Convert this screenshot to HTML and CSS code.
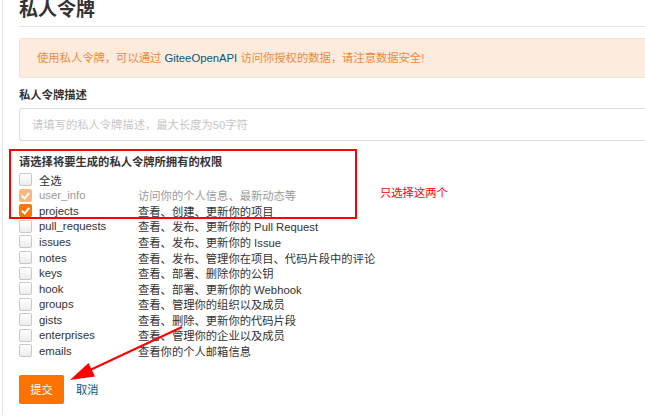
FILE: index.html
```html
<!DOCTYPE html>
<html lang="zh-CN">

<head>
  <meta charset="UTF-8" />
  <title>私人令牌</title>
  <link rel="stylesheet" href="styles.css">
</head>

<body>

  <div class="page">
    <h1 class="title">私人令牌</h1>

    <div class="alert">
      使用私人令牌，可以通过 <a href="#">GiteeOpenAPI</a> 访问你授权的数据，请注意数据安全!
    </div>

    <label class="field-label">私人令牌描述</label>
    <input class="field-input" type="text" placeholder="请填写的私人令牌描述，最大长度为50字符">

    <div class="scopes">
      <p class="scopes-title">请选择将要生成的私人令牌所拥有的权限</p>

      <div class="scope"><span class="box"></span><span class="name">全选</span></div>
      <div class="scope disabled"><span class="box on"></span><span class="name">user_info</span><span class="desc">访问你的个人信息、最新动态等</span></div>
      <div class="scope"><span class="box on"></span><span class="name">projects</span><span class="desc">查看、创建、更新你的项目</span></div>
      <div class="scope"><span class="box"></span><span class="name">pull_requests</span><span class="desc">查看、发布、更新你的 Pull Request</span></div>
      <div class="scope"><span class="box"></span><span class="name">issues</span><span class="desc">查看、发布、更新你的 Issue</span></div>
      <div class="scope"><span class="box"></span><span class="name">notes</span><span class="desc">查看、发布、管理你在项目、代码片段中的评论</span></div>
      <div class="scope"><span class="box"></span><span class="name">keys</span><span class="desc">查看、部署、删除你的公钥</span></div>
      <div class="scope"><span class="box"></span><span class="name">hook</span><span class="desc">查看、部署、更新你的 Webhook</span></div>
      <div class="scope"><span class="box"></span><span class="name">groups</span><span class="desc">查看、管理你的组织以及成员</span></div>
      <div class="scope"><span class="box"></span><span class="name">gists</span><span class="desc">查看、删除、更新你的代码片段</span></div>
      <div class="scope"><span class="box"></span><span class="name">enterprises</span><span class="desc">查看、管理你的企业以及成员</span></div>
      <div class="scope"><span class="box"></span><span class="name">emails</span><span class="desc">查看你的个人邮箱信息</span></div>
    </div>

    <div class="actions">
      <button class="btn-submit">提交</button>
      <a class="cancel" href="#">取消</a>
    </div>
  </div>

  <!-- annotations drawn on top of the screenshot -->
  <div class="mark-box"></div>
  <div class="mark-note">只选择这两个</div>
  <svg class="mark-arrow" viewBox="0 0 645 417" width="645" height="417">
    <line x1="182" y1="327" x2="88" y2="371" stroke="#f00" stroke-width="2" />
    <polygon points="70,380 88.5,363 95,376.5" fill="#f00" />
  </svg>

</body>

</html>
```

FILE: styles.css
```css
body {
  margin: 0;
  position: relative;
  height: 417px;
  overflow: hidden;
  font-family: "Liberation Sans", "Noto Sans CJK SC", sans-serif;
  font-size: 11.3px;
  color: #333;
  background: #fff;
}

.page {
  margin-left: 2px;
  padding-left: 16px;
  height: 100%;
  border-left: 1px solid #e4e4e4;
}

.title {
  margin: -2px 0 0;
  padding-bottom: 4px;
  font-size: 19px;
  line-height: 24px;
  font-weight: bold;
  color: #333;
  border-bottom: 1px solid #e3e3e6;
}

.alert {
  margin-top: 11px;
  padding: 11px 17px;
  line-height: 16px;
  color: #f0883a;
  background: #fdecdd;
  border: 1px solid #f3e1d2;
  border-right: none;
  border-radius: 3px 0 0 3px;
}

.alert a {
  color: #005980;
  text-decoration: none;
}

.field-label {
  display: block;
  margin-top: 9px;
  line-height: 16px;
  font-weight: bold;
}

.field-input {
  display: block;
  box-sizing: border-box;
  width: calc(100% + 4px);
  height: 33px;
  margin-top: 5px;
  padding: 0 12px;
  font-family: inherit;
  font-size: 11.3px;
  border: 1px solid #dcdde1;
  border-right: none;
  border-radius: 3px 0 0 3px;
  outline: none;
}

.field-input::placeholder {
  color: #c6c6c6;
}

.scopes-title {
  margin: 13px 0 2px;
  line-height: 16px;
  font-weight: bold;
}

.scope {
  display: flex;
  align-items: center;
  height: 15.55px;
}

.box {
  box-sizing: border-box;
  width: 13px;
  height: 13px;
  margin-right: 7px;
  border: 1px solid #c8c8c8;
  border-radius: 2px;
  background: linear-gradient(#fff, #ececec);
  position: relative;
}

.box.on {
  border-color: #ff7500;
  background: #ff7500;
}

.box.on::after {
  content: "";
  position: absolute;
  left: 3px;
  top: 1px;
  width: 3px;
  height: 6px;
  border: solid #fff;
  border-width: 0 2px 2px 0;
  transform: rotate(40deg);
}

.disabled .box.on {
  border-color: #fdb77e;
  background: #fdb77e;
}

.name {
  width: 99px;
}

.disabled .name,
.disabled .desc {
  color: #9a9a9a;
}

.actions {
  display: flex;
  align-items: center;
  gap: 12px;
  margin-top: 16px;
}

.btn-submit {
  width: 45px;
  height: 29px;
  padding: 0;
  font-family: inherit;
  font-size: 11.3px;
  color: #fff;
  background: #fe7300;
  border: none;
  border-radius: 2px;
}

.cancel {
  color: #005980;
  text-decoration: none;
}

.mark-box {
  position: absolute;
  left: 9px;
  top: 149px;
  width: 344px;
  height: 66px;
  border: 2px solid #f00;
}

.mark-note {
  position: absolute;
  left: 380px;
  top: 185px;
  line-height: 16px;
  color: #f00;
}

.mark-arrow {
  position: absolute;
  left: 0;
  top: 0;
  pointer-events: none;
}
```
